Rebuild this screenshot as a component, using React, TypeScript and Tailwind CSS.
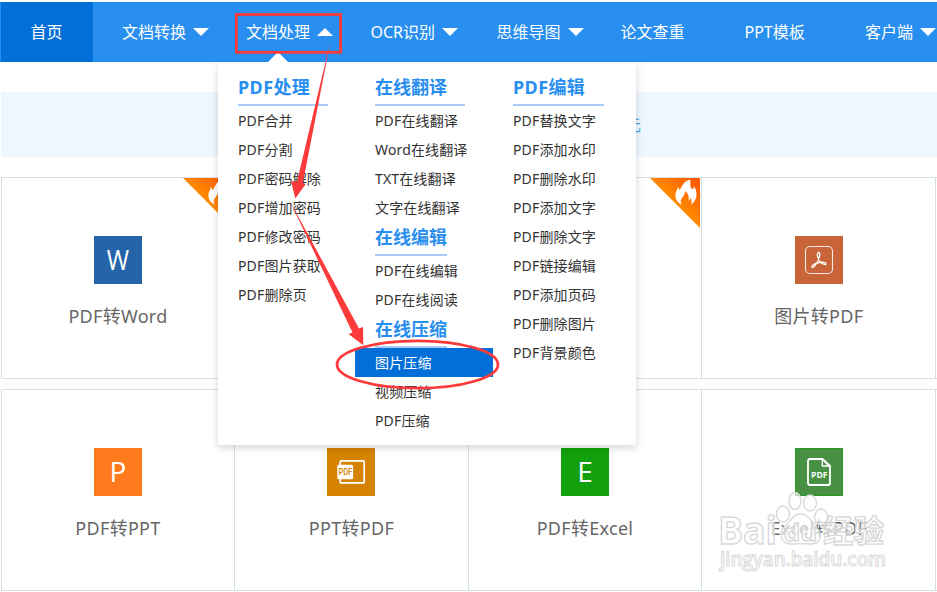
import type { ReactNode } from 'react';

type NavItem = { label: string; width: string; arrow?: 'up' | 'down' };
type MenuGroup = { title: string; line: string; items: string[] };
type Tool = { label?: string; color?: string; icon?: ReactNode; hot?: boolean };

const NAV: NavItem[] = [
  { label: '文档转换', width: 'w-[124px]', arrow: 'down' },
  { label: '文档处理', width: 'w-[124.5px]', arrow: 'up' },
  { label: 'OCR识别', width: 'w-[126px]', arrow: 'down' },
  { label: '思维导图', width: 'w-[124px]', arrow: 'down' },
  { label: '论文查重', width: 'w-[124px]' },
  { label: 'PPT模板', width: 'w-[120.5px]' },
  { label: '客户端', width: 'w-[80px]', arrow: 'down' },
];

const MENU: MenuGroup[][] = [
  [
    {
      title: 'PDF处理',
      line: 'w-[90px]',
      items: ['PDF合并', 'PDF分割', 'PDF密码解除', 'PDF增加密码', 'PDF修改密码', 'PDF图片获取', 'PDF删除页'],
    },
  ],
  [
    {
      title: '在线翻译',
      line: 'w-[90px]',
      items: ['PDF在线翻译', 'Word在线翻译', 'TXT在线翻译', '文字在线翻译'],
    },
    { title: '在线编辑', line: 'w-[72px]', items: ['PDF在线编辑', 'PDF在线阅读'] },
    { title: '在线压缩', line: 'w-[72px]', items: ['图片压缩', '视频压缩', 'PDF压缩'] },
  ],
  [
    {
      title: 'PDF编辑',
      line: 'w-[91px]',
      items: [
        'PDF替换文字',
        'PDF添加水印',
        'PDF删除水印',
        'PDF添加文字',
        'PDF删除文字',
        'PDF链接编辑',
        'PDF添加页码',
        'PDF删除图片',
        'PDF背景颜色',
      ],
    },
  ],
];

const ACTIVE = '图片压缩';

function Letter({ children, narrow }: { children: string; narrow?: boolean }) {
  return (
    <span
      className={`mb-0.5 font-['Open_Sans'] text-[28px] leading-none font-normal text-white ${narrow ? 'scale-x-[.86]' : ''}`}
    >
      {children}
    </span>
  );
}

function AcrobatIcon() {
  return (
    <svg width="48" height="48" viewBox="0 0 48 48" fill="none" stroke="#fff">
      <rect x="10.5" y="10.5" width="27" height="27" rx="4.5" strokeWidth="1.1" opacity=".85" />
      <path
        d="M23.4 16.4c1.7-.3 1.7 1.7 1.1 4.1-.5 2.9-2.6 6.7-4.4 9.2-1.5 2-3.5 2.4-3.2.9.3-1.7 4.1-3.6 7.6-4.1 2.9-.5 6.3-.2 6.5 1.1.1 1.5-2.6 1-4.6-.5-2.1-1.7-3.5-4.5-3.9-7-.3-1.9-.2-3.3.9-3.7z"
        strokeWidth="1.3"
      />
    </svg>
  );
}

function SlidePdfIcon() {
  return (
    <svg width="48" height="48" viewBox="0 0 48 48" fill="none">
      <rect x="13.2" y="12.9" width="24" height="22" rx="1" stroke="#fff" strokeWidth="1.7" />
      <rect x="10.3" y="16.8" width="15.8" height="14.4" rx="1.5" fill="#fff" />
      <text x="11.4" y="27.2" textLength="13.8" lengthAdjust="spacingAndGlyphs" fontSize="8.5" fontWeight="500" fontFamily="Roboto" fill="#d68100">
        PDF
      </text>
    </svg>
  );
}

function SheetPdfIcon() {
  return (
    <svg width="48" height="48" viewBox="0 0 48 48" fill="none" stroke="#fff" strokeWidth="1.8">
      <rect x=".5" y=".5" width="47" height="47" stroke="#259b24" strokeWidth="1" />
      <path d="M27.5 11H15q-2 0-2 2v22q0 2 2 2h18q2 0 2-2V18z" strokeLinejoin="round" />
      <path d="M27.3 11.3V18H34z" strokeLinejoin="round" strokeWidth="1.4" />
      <text x="16" y="30.4" textLength="16.5" lengthAdjust="spacingAndGlyphs" fontSize="8.5" fontWeight="700" fontFamily="Open Sans" fill="#fff" stroke="none">
        PDF
      </text>
    </svg>
  );
}

const ROWS: Tool[][] = [
  [
    { label: 'PDF转Word', color: 'bg-[#2564a9]', icon: <Letter narrow>W</Letter>, hot: true },
    {},
    { hot: true },
    { label: '图片转PDF', color: 'bg-[#c86437]', icon: <AcrobatIcon /> },
  ],
  [
    { label: 'PDF转PPT', color: 'bg-[#ff7a1c]', icon: <Letter>P</Letter> },
    { label: 'PPT转PDF', color: 'bg-[#d68303]', icon: <SlidePdfIcon /> },
    { label: 'PDF转Excel', color: 'bg-[#12a10c]', icon: <Letter>E</Letter> },
    { label: 'Excel转PDF', color: 'bg-[#489144]', icon: <SheetPdfIcon /> },
  ],
];

function HotRibbon() {
  return (
    <svg className="absolute top-0 right-0" width="51" height="51" viewBox="0 0 51 51">
      <defs>
        <linearGradient id="hot" x1=".25" y1=".75" x2="1" y2="0">
          <stop offset="0" stopColor="#ffa600" />
          <stop offset="1" stopColor="#ff5200" />
        </linearGradient>
      </defs>
      <path d="M0 0h50v50z" fill="url(#hot)" />
      <path
        d="M40 1.8c1 3.2-.5 5.3 1.2 8.2.6 1.2 1.8 1.2 2.3.2.5-.9.3-1.7.7-2.3.3 1.4 2.3 4.1 2.3 7.6.4 4.5-1.5 8-5.5 11.3 1-2.8.8-5.1-.6-7.3-.3 1.5-.6 2.7-1.9 3.3.8-3.8-.3-8.1-3.5-9.6.4 4.7-4.2 6.2-4.3 10.1 0 1.4.4 2.5 1.2 3.5-4.2-1.7-6.7-5.5-6.5-10 .2-3.5 2.1-4.7 2.5-7.7 1 .9 1.3 1.7 1.4 3 3.6-2.8 2.6-8.5 10.7-10.3z"
        fill="#fff"
      />
    </svg>
  );
}

function ToolCard({ tool }: { tool: Tool }) {
  return (
    <div className="relative flex h-[200px] flex-col items-center border-l border-[#d5e0e5] pt-[58px]">
      {tool.hot && <HotRibbon />}
      {tool.icon && (
        <>
          <div className={`flex size-12 items-center justify-center ${tool.color}`}>{tool.icon}</div>
          <p className="mt-[18px] text-lg leading-7 tracking-[0.3px] text-[#666]">{tool.label}</p>
        </>
      )}
    </div>
  );
}

function Caret({ up }: { up?: boolean }) {
  return (
    <svg className="ml-[7px]" width="16" height="8" viewBox="0 0 16 8">
      <path d={up ? 'M8 0l8 8H0z' : 'M0 0h16L8 8z'} fill="#fff" />
    </svg>
  );
}

function Dropdown() {
  return (
    <div className="absolute top-[62px] left-[218px] flex h-[383px] w-[418px] bg-white pt-2.5 shadow-[0_3px_8px_rgba(0,0,0,0.16)]">
      <svg className="absolute -top-2.5 left-[50px]" width="20" height="10" viewBox="0 0 20 10">
        <path d="M10 0l10 10H0z" fill="#fff" />
      </svg>
      {MENU.map((column, i) => (
        <div key={i} className={i === 0 ? 'w-[137px]' : 'w-[138px]'}>
          {column.map((group) => (
            <section key={group.title}>
              <h3
                className={`ml-5 h-[34px] border-b-2 border-[#a8cbf8] text-lg leading-[30px] font-bold whitespace-nowrap text-[#288ef0] ${
                  group.title.startsWith('PDF') ? 'tracking-[0.4px]' : ''
                } ${group.line}`}
              >
                {group.title}
              </h3>
              <ul>
                {group.items.map((item) => (
                  <li
                    key={item}
                    className={`h-[29px] pl-5 text-sm leading-[29px] tracking-[0.15px] whitespace-nowrap ${
                      item === ACTIVE ? 'bg-[#026fd8] text-white' : 'text-[#333]'
                    }`}
                  >
                    {item}
                  </li>
                ))}
              </ul>
            </section>
          ))}
        </div>
      ))}
    </div>
  );
}

function Annotations() {
  return (
    <svg className="absolute top-0 left-0" width="937" height="592" fill="#fc3a3a">
      <rect x="236.4" y="14.5" width="104.2" height="37.8" fill="none" stroke="#fc3a3a" strokeWidth="2.8" />
      <path d="M330.5 41L302.8 183.3L305.6 184.2L295.3 198.5L291 181.3L297 181.8z" />
      <path d="M289.3 200L359 328.5L363 327L363.3 345.3L348.5 334L352.5 332.6z" />
      <ellipse cx="417.5" cy="364.5" rx="80.5" ry="23.7" fill="none" stroke="#fc3a3a" strokeWidth="2.8" />
    </svg>
  );
}

function Watermark() {
  return (
    <svg
      className="absolute top-[485px] left-[712px]"
      width="185"
      height="95"
      fill="#fff"
      fillOpacity=".65"
      stroke="#d9d9d9"
      strokeWidth="1.4"
      fontWeight="700"
    >
      <text x="6" y="58.5" fontSize="38" textLength="59" lengthAdjust="spacingAndGlyphs" fontFamily="Open Sans">
        Bai
      </text>
      <ellipse cx="71" cy="29" rx="6.5" ry="8" />
      <ellipse cx="83" cy="16" rx="6" ry="8.5" />
      <ellipse cx="98" cy="18" rx="6.5" ry="8" />
      <ellipse cx="109" cy="32" rx="6.5" ry="8" />
      <path d="M89 29c7 0 9 6 14 12 7 6 8 18-4 18-6 0-12-1-18 0-12 1-15-10-9-17 6-5 9-13 17-13z" />
      <text x="72" y="56" fontSize="23" textLength="33" lengthAdjust="spacingAndGlyphs" fontFamily="Open Sans">
        du
      </text>
      <text x="111" y="57" fontSize="31" textLength="61" lengthAdjust="spacingAndGlyphs" fontFamily="Noto Sans CJK SC">
        经验
      </text>
      <text x="8" y="81" fontSize="19" strokeWidth="1" textLength="166" lengthAdjust="spacingAndGlyphs" fontFamily="Open Sans" fontWeight="600">
        jingyan.baidu.com
      </text>
    </svg>
  );
}

export default function App() {
  return (
    <div className="relative h-[592px] w-[937px] overflow-hidden bg-white pt-0.5 font-['Noto_Sans','Noto_Sans_CJK_SC',sans-serif]">
      {/* Navigation */}
      <nav className="flex h-[60px] bg-[#288ef0] pl-px text-base text-white">
        <a className="flex w-[92px] shrink-0 items-center justify-center bg-[#026fd8] pr-px">首页</a>
        <div className="flex pl-[29px]">
          {NAV.map((item) => (
            <a key={item.label} className={`flex shrink-0 items-center whitespace-nowrap ${item.width}`}>
              {item.label}
              {item.arrow && <Caret up={item.arrow === 'up'} />}
            </a>
          ))}
        </div>
      </nav>

      {/* Notice bar */}
      <div className="mt-[30px] ml-px flex h-[65px] items-center bg-[#eef7ff] pl-[624px] text-base text-[#4aa3e8]">元</div>

      {/* Tool cards */}
      <main className="mt-5 ml-px flex flex-col gap-2.5">
        {ROWS.map((row, i) => (
          <div key={i} className="grid grid-cols-[233px_233.8px_233.4px_234.1px_1.7px] border-y border-[#d5e0e5]">
            {row.map((tool, j) => (
              <ToolCard key={j} tool={tool} />
            ))}
            <div className="border-l border-[#d5e0e5]" />
          </div>
        ))}
      </main>

      <Dropdown />
      <Watermark />
      <Annotations />
    </div>
  );
}
